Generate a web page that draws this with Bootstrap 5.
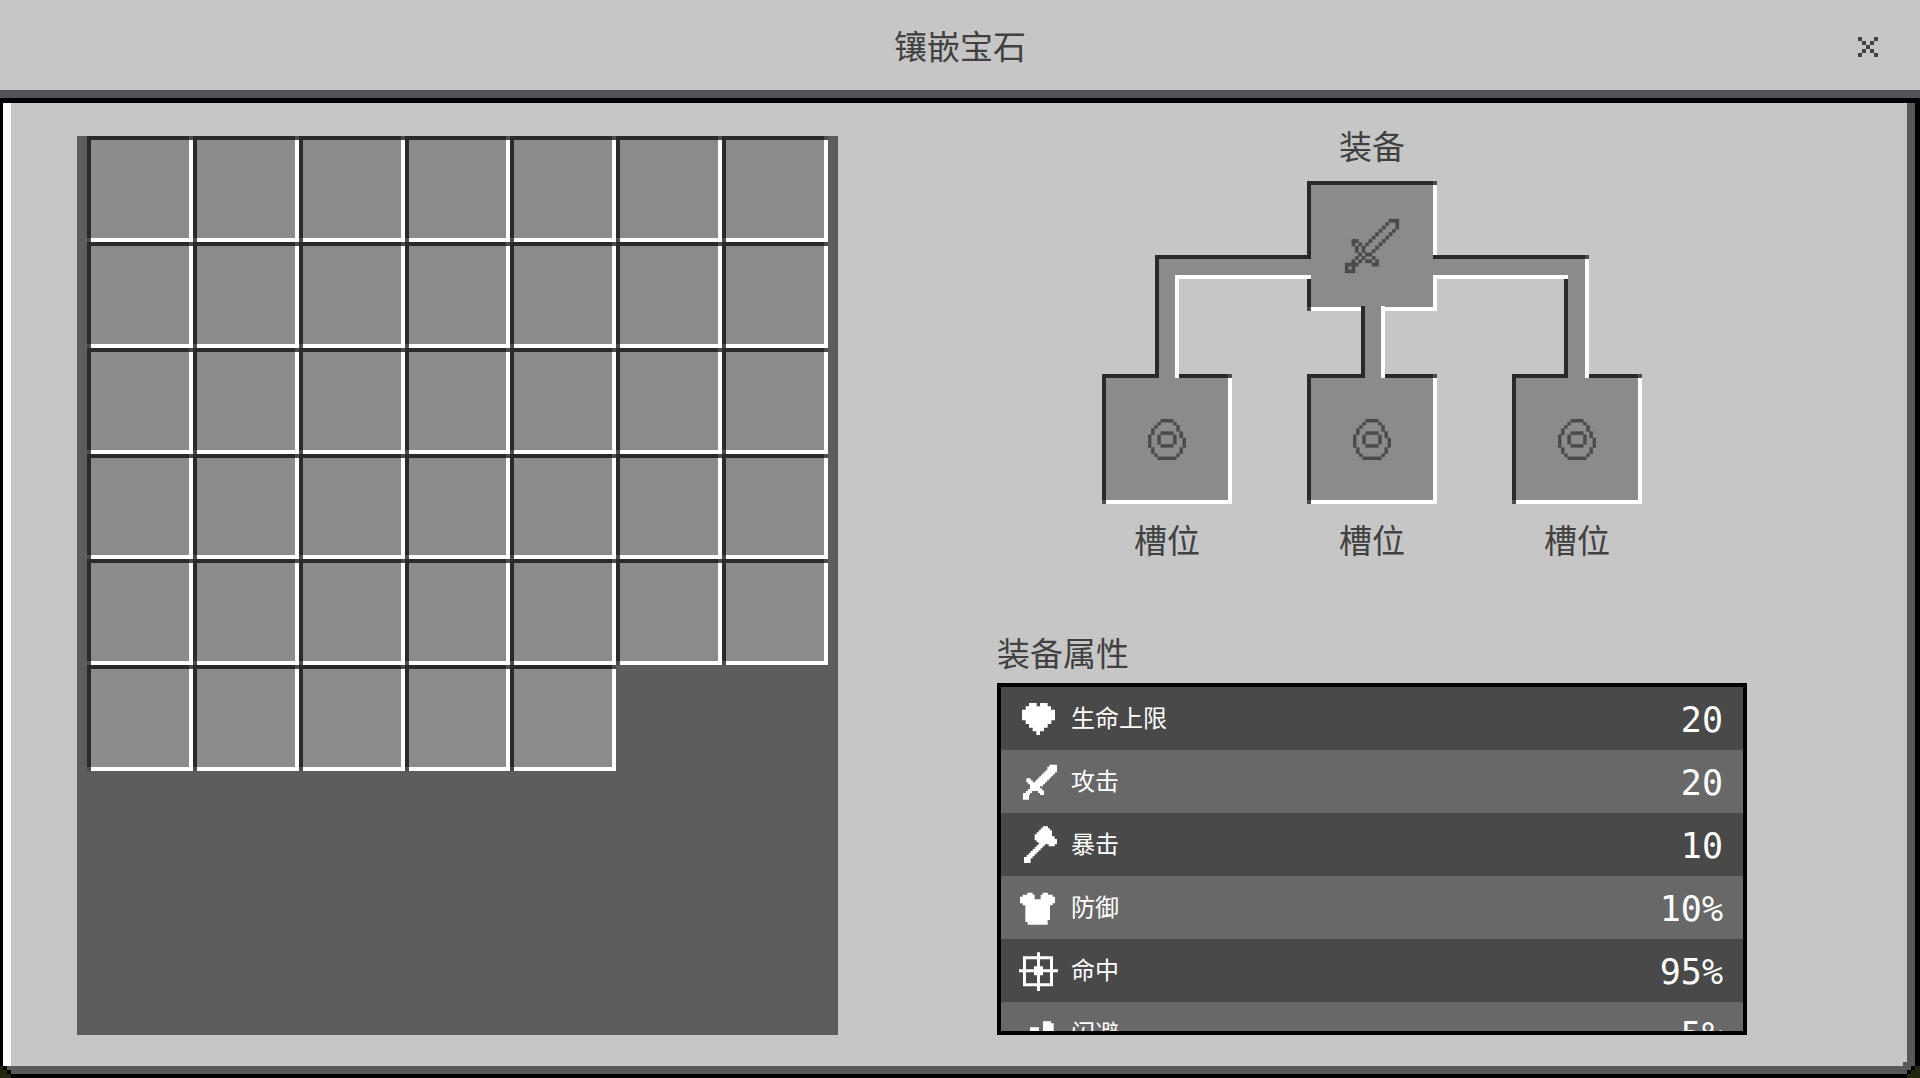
<!DOCTYPE html>
<html lang="zh-CN">
<head>
<meta charset="utf-8">
<meta name="viewport" content="width=device-width, initial-scale=1">
<title>镶嵌宝石</title>
<link href="https://cdn.jsdelivr.net/npm/bootstrap@5.3.0/dist/css/bootstrap.min.css" rel="stylesheet">
<style>
  :root { --face:#c6c6c6; --edge:#58585a; --shade:#2a2a2a; --well:#8b8b8b; --ink:#414141; }
  body { background:#24260f; color:var(--ink); font-family:"Noto Sans CJK SC",sans-serif; font-size:33px; line-height:40px; font-weight:400; }
  .titlebar { grid-template-columns:1fr auto 1fr; height:103px; background:var(--face); border-bottom:5px solid #000005; box-shadow:inset 0 -8px #535357; padding:0 42px 8px; }
  .titlebar h1, .attr-title { font-size:33px; line-height:40px; font-weight:400; margin:0; }
  .attr-title { margin:73px 0 11px; }
  .close-x { width:20px; height:20px; margin-top:4px; padding:0; border:0; background:none; color:var(--ink); line-height:0; }
  .frame { border-left:3px solid #000; border-right:5px solid #000; border-bottom:4px solid #000; }
  .frame-face { background:linear-gradient(#fff,#fff) left/8px 100% no-repeat, linear-gradient(var(--edge),var(--edge)) right/8px 100% no-repeat, var(--face); box-shadow:inset 0 -8px var(--edge); padding:0 168px 39px 74px; gap:159px; }
  .corner { position:absolute; bottom:-4px; width:20px; height:16px; }
  .corner-l { left:-3px; } .corner-r { right:-5px; }
  .bag { flex:741 1 0; margin-top:33px; padding:0 10px; background:#5d5d5d; }
  .bag-grid { display:grid; grid-template-columns:repeat(7,1fr); }
  .bag-grid .well { aspect-ratio:1; }
  .side { flex:750 1 0; padding-top:22px; min-height:0; }
  .well { display:flex; align-items:center; justify-content:center; padding:0; border:0; border-radius:0; color:#4a4b4c;
    background:
      linear-gradient(#4c4c4c,#4c4c4c) right top/4px 4px no-repeat,
      linear-gradient(#4c4c4c,#4c4c4c) left bottom/4px 4px no-repeat,
      linear-gradient(var(--shade),var(--shade)) left/4px 100% no-repeat,
      linear-gradient(var(--shade),var(--shade)) top/100% 4px no-repeat,
      linear-gradient(#fff,#fff) right/4px 100% no-repeat,
      linear-gradient(#fff,#fff) bottom/100% 4px no-repeat, var(--well); }
  .well-lg { width:130px; height:130px; }
  .tree { width:540px; }
  .tree-top { gap:16px; margin-bottom:63px; }
  .socket { gap:15px; }
  .pipes { position:absolute; left:0; top:56px; width:540px; height:323px; pointer-events:none; }
  .attr-box { flex:1 1 0; min-height:0; overflow-y:auto; scrollbar-width:none; border:4px solid #000; background:#494949; }
  .attr-box::-webkit-scrollbar { display:none; }
  .attrs { width:100%; color:#fff; }
  .attrs tr { height:63px; background:#494949; }
  .attrs tr:nth-child(even) { background:#686868; }
  .attrs th { font-size:24px; line-height:32px; font-weight:400; padding:0 0 0 17px; }
  .attrs td { font-family:"DejaVu Sans Mono",monospace; font-size:35px; line-height:40px; font-weight:400; padding:2px 20px 0 0; text-align:right; }
  .attrs svg { width:40px; height:40px; margin-right:13px; fill:#fff; flex:none; }
  .attrs span { padding-bottom:3px; }
  svg { fill:currentColor; display:block; }
  .close-x svg, .pipes, .corner { shape-rendering:crispEdges; }
  .well svg { stroke:currentColor; stroke-width:.1; overflow:visible; }
</style>
<script src="https://cdn.jsdelivr.net/npm/bootstrap@5.3.0/dist/js/bootstrap.bundle.min.js"></script>
</head>
<body class="d-flex flex-column vh-100 overflow-hidden">
<svg class="d-none" aria-hidden="true">
  <symbol id="gem" viewBox="0 0 12 13"><path d="M4 0h4v1H4zM3 1h1v1H3zM8 1h1v1H8zM2 2h1v1H2zM9 2h1v2H9zM1 3h1v2H1zM4 4h4v1H4zM10 4h1v2h-1zM0 5h1v4H0zM3 5h1v3H3zM8 5h1v3H8zM11 6h1v3h-1zM4 8h4v1H4zM1 9h1v2H1zM10 9h1v2h-1zM2 11h1v1H2zM9 11h1v1H9zM3 12h6v1H3z"/></symbol>
</svg>

<header class="titlebar d-grid align-items-center flex-shrink-0">
  <span></span>
  <h1>镶嵌宝石</h1>
  <button class="close-x ms-auto" type="button" aria-label="关闭">
    <svg width="20" height="20" viewBox="0 0 5 5"><path d="M0 0h1v1H0zM4 0h1v1H4zM1 1h1v1H1zM3 1h1v1H3zM2 2h1v1H2zM1 3h1v1H1zM3 3h1v1H3zM0 4h1v1H0zM4 4h1v1H4z"/></svg>
  </button>
</header>

<div class="frame d-flex flex-grow-1 position-relative">
  <main class="frame-face d-flex flex-grow-1">
    <section class="bag" aria-label="背包">
      <div class="bag-grid" id="bag"></div>
    </section>

    <section class="side d-flex flex-column">
      <div class="tree position-relative mx-auto">
        <div class="tree-top d-flex flex-column align-items-center">
          <span>装备</span>
          <button class="well well-lg" type="button" aria-label="装备">
            <svg width="54" height="54" viewBox="0 0 16 16"><path d="M13 0h3v3h-1V1h-2zM12 1h1v1h-1zM11 2h1v1h-1zM10 3h1v1h-1zM14 3h1v1h-1zM9 4h1v1H9zM13 4h1v1h-1zM8 5h1v1H8zM12 5h1v1h-1zM2 6h2v1H3v1H2zM7 6h1v1H7zM11 6h1v1h-1zM4 7h1v1H4zM3 8h1v2H3zM6 7h1v1H6zM10 7h1v1h-1zM5 8h1v2H5zM9 8h1v1H9zM8 9h1v1H8zM4 10h1v1H4zM6 10h2v1H6zM3 11h1v1H3zM5 11h1v1H5zM8 11h1v1H8zM2 12h1v1H2zM4 12h1v1H4zM6 12h2v1H6zM9 12h1v2H8v-1h1zM3 13h1v1H3zM0 13h3v3H0zM1 14v1h1v-1z" fill-rule="evenodd"/></svg>
          </button>
        </div>
        <div class="d-flex justify-content-between">
          <div class="socket d-flex flex-column align-items-center"><button class="well well-lg" type="button" aria-label="槽位"><svg width="38" height="41"><use href="#gem"/></svg></button><span>槽位</span></div>
          <div class="socket d-flex flex-column align-items-center"><button class="well well-lg" type="button" aria-label="槽位"><svg width="38" height="41"><use href="#gem"/></svg></button><span>槽位</span></div>
          <div class="socket d-flex flex-column align-items-center"><button class="well well-lg" type="button" aria-label="槽位"><svg width="38" height="41"><use href="#gem"/></svg></button><span>槽位</span></div>
        </div>
        <svg class="pipes" viewBox="0 0 540 323" aria-hidden="true">
          <path fill="#8b8b8b" d="M53 74h156v24H77v99H53zM331 74h156v123h-24V98H331zM259 125h24v72h-24z"/>
          <path fill="#2a2a2a" d="M53 74h156v4H57v119h-4zM331 74h152v4H331zM462 97h4v100h-4zM259 125h4v72h-4z"/>
          <path fill="#fff" d="M73 94h136v4H77v99h-4zM331 94h135v4H331zM483 78h4v119h-4zM279 125h4v72h-4z"/>
          <path fill="#4c4c4c" d="M483 74h4v4h-4z"/>
        </svg>
      </div>

      <h2 class="attr-title">装备属性</h2>
      <div class="attr-box">
        <table class="attrs">
          <tbody>
            <tr><th scope="row"><div class="d-flex align-items-center"><svg viewBox="114 234 120 120"><path d="M147 246H170V256H180V246H203V256H213V266H225V298H214V309H203V320H192V331H180V342H169V331H158V320H147V309H137V298H126V266H137V256H147z"/></svg><span>生命上限</span></div></th><td>20</td></tr>
            <tr><th scope="row"><div class="d-flex align-items-center"><svg viewBox="114 424 120 120"><path d="M208 432H231V455H225V461H219V467H213V473H207V479H201V485H195V491H189V497H180V503H186V509H192V523H180V517H174V511H156V517H150V523H147V537H129V517H138V511H144V505H150V491H144V485H139V473H152V479H158V485H166V479H172V473H178V467H184V461H190V455H196V449H202V438H208z"/></svg><span>攻击</span></div></th><td>20</td></tr>
            <tr><th scope="row"><div class="d-flex align-items-center"><svg viewBox="12 404 120 120"><path d="M86 408H102V414H108V420H114V438H122V446H129V462H122V468H104V462H92V468H86V474H80V480H74V486H68V492H62V498H56V504H50V518H30V500H38V494H44V488H50V482H56V476H62V470H68V464H74V456H68V450H62V432H68V426H74V420H80V414H86z"/></svg><span>暴击</span></div></th><td>10</td></tr>
            <tr><th scope="row"><div class="d-flex align-items-center"><svg viewBox="12 594 120 120"><path d="M40 608H56V614H62V628H80V614H86V608H102V614H116V620H123V640H116V646H108V690H101V704H41V696H34V646H26V640H18V620H26V614H40z"/></svg><span>防御</span></div></th><td>10%</td></tr>
            <tr><th scope="row"><div class="d-flex align-items-center"><svg viewBox="12 785 120 120"><path fill-rule="evenodd" d="M27 801H117V891H27zM36 810V882H108V810z"/><path d="M69 789h9v117h-9zM15 840h117v9H15zM60 831h27v27H60z"/></svg><span>命中</span></div></th><td>95%</td></tr>
            <tr><th scope="row"><div class="d-flex align-items-center"><svg viewBox="12 974 120 120"><path d="M87 996H111V1002H119V1050H125V1062H87zM48 1014H75V1074H36V1060H48z"/></svg><span>闪避</span></div></th><td>5%</td></tr>
          </tbody>
        </table>
      </div>
    </section>
  </main>
  <svg class="corner corner-l" viewBox="0 0 20 16" aria-hidden="true"><path fill="#24260f" d="M0 4h11v12H0z"/><path fill="#000" d="M3 4h4v4H3zM7 8h4v4H7z"/><path fill="#58585a" d="M7 4h4v4H7z"/></svg>
  <svg class="corner corner-r" viewBox="0 0 20 16" aria-hidden="true"><path fill="#58585a" d="M3 0h4v4H3z"/><path fill="#24260f" d="M7 4h13v12H7z"/><path fill="#58585a" d="M7 4h4v4H7z"/><path fill="#000" d="M11 4h4v4h-4zM7 8h4v4H7z"/></svg>
</div>

<script>
  // the bag holds 40 slots
  document.getElementById('bag').innerHTML = '<button class="well" type="button"></button>'.repeat(40);
</script>
</body>
</html>
